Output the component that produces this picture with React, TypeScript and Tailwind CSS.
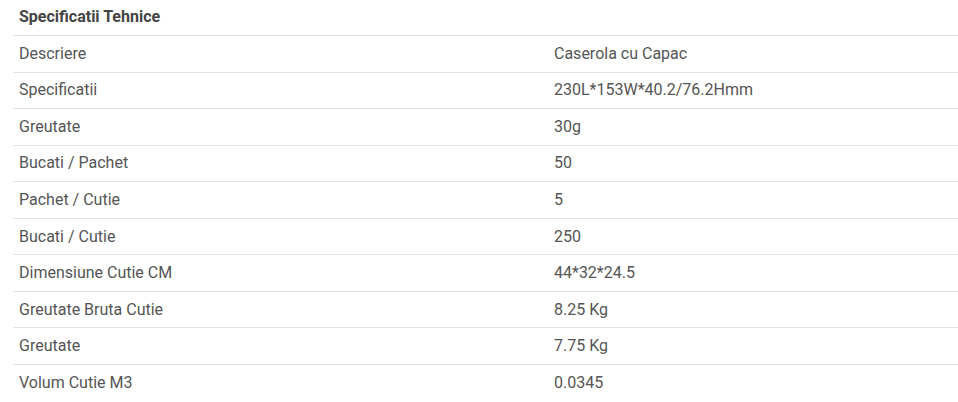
const rows: [string, string][] = [
  ["Descriere", "Caserola cu Capac"],
  ["Specificatii", "230L*153W*40.2/76.2Hmm"],
  ["Greutate", "30g"],
  ["Bucati / Pachet", "50"],
  ["Pachet / Cutie", "5"],
  ["Bucati / Cutie", "250"],
  ["Dimensiune Cutie CM", "44*32*24.5"],
  ["Greutate Bruta Cutie", "8.25 Kg"],
  ["Greutate", "7.75 Kg"],
  ["Volum Cutie M3", "0.0345"],
];

export default function App() {
  return (
    <div className="h-[402px] w-[958px] overflow-hidden bg-white pl-[13px] font-['Roboto',sans-serif] text-[16px] text-[#555]">
      <div className="flex h-[35px] items-center pl-[6px] pb-[2px] font-bold text-[#444]">Specificatii Tehnice</div>
      {rows.map(([label, value], i) => (
        <div key={i} className="flex h-[36.55px] items-center border-t border-[#e3e3e3]">
          <div className="w-[535px] pl-[6px]">{label}</div>
          <div className="flex-1 pl-[6px]">{value}</div>
        </div>
      ))}
    </div>
  );
}
